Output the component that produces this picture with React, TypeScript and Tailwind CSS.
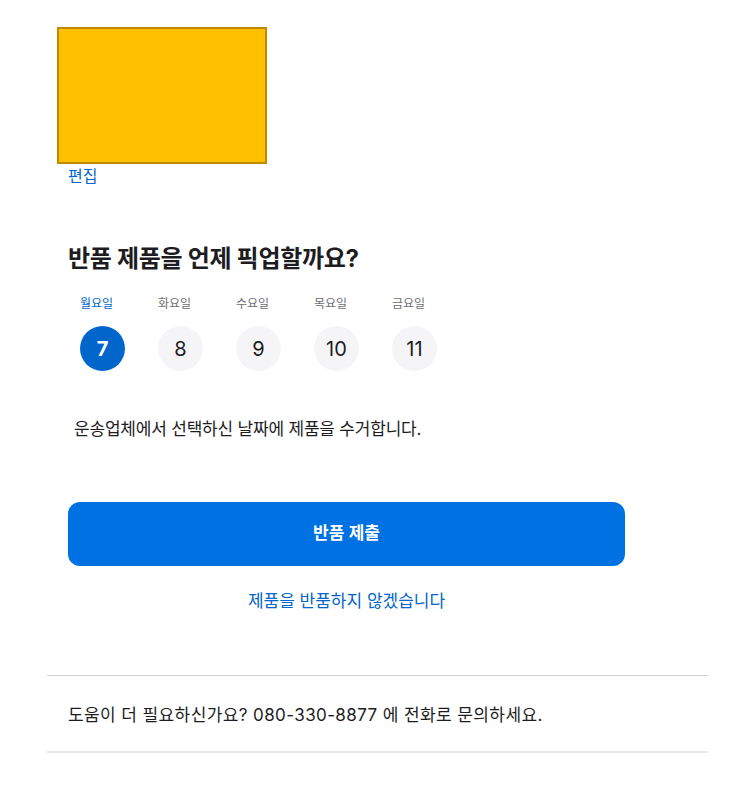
const days = [
  { label: "월요일", date: 7 },
  { label: "화요일", date: 8 },
  { label: "수요일", date: 9 },
  { label: "목요일", date: 10 },
  { label: "금요일", date: 11 },
];

const font = { fontFamily: 'Inter, "Noto Sans CJK KR", "Noto Sans", sans-serif' };

export default function App() {
  const selected = 7;

  return (
    <div className="min-h-[787px] w-[730px] bg-white text-[#1d1d1f]" style={font}>
      <div className="pl-[57px] pt-[27px]">
        <div className="h-[137px] w-[210px] border-2 border-[#c08a00] bg-[#ffc000]" />
        <a href="#" className="ml-[11px] block text-[16px] leading-[24px] text-[#0066cc]">
          편집
        </a>
      </div>

      <div className="px-[68px]">
        <h2 className="mt-[55px] text-[24px] font-bold leading-[32px] tracking-[-0.3px]">
          반품 제품을 언제 픽업할까요?
        </h2>

        <div className="mt-[20px] flex pl-[12px]">
          {days.map((d) => {
            const active = d.date === selected;
            return (
              <button key={d.date} className="flex w-[78px] flex-col items-start">
                <span
                  className={
                    "text-[12px] leading-[18px] " +
                    (active ? "text-[#0066cc]" : "text-[#6e6e73]")
                  }
                >
                  {d.label}
                </span>
                <span
                  className={
                    "mt-[13px] flex h-[45px] w-[45px] items-center justify-center rounded-full text-[20px] " +
                    (active ? "bg-[#0066cc] font-bold text-white" : "bg-[#f5f5f7] text-[#1d1d1f]")
                  }
                >
                  {d.date}
                </span>
              </button>
            );
          })}
        </div>

        <p className="mt-[45px] pl-[6px] text-[17px] leading-[26px] tracking-[-0.2px] text-[#1d1d1f]">
          운송업체에서 선택하신 날짜에 제품을 수거합니다.
        </p>

        <button className="mt-[60px] flex h-[64px] w-[557px] items-center justify-center rounded-[12px] bg-[#0071e3] text-[17px] font-semibold text-white">
          반품 제출
        </button>

        <div className="mt-[22px] w-[557px] text-center">
          <a href="#" className="text-[17px] leading-[26px] text-[#0066cc]">
            제품을 반품하지 않겠습니다
          </a>
        </div>
      </div>

      <div className="ml-[47px] mr-[22px] mt-[61px] border-t border-[#d2d2d7] pb-[24px] pl-[21px] pt-[27px]">
        <p className="text-[17px] leading-[24px] tracking-[0.4px] text-[#1d1d1f]">
          도움이 더 필요하신가요? 080-330-8877 에 전화로 문의하세요.
        </p>
      </div>
      <div className="ml-[47px] mr-[22px] border-t-2 border-[#e8e8ed]" />
    </div>
  );
}
